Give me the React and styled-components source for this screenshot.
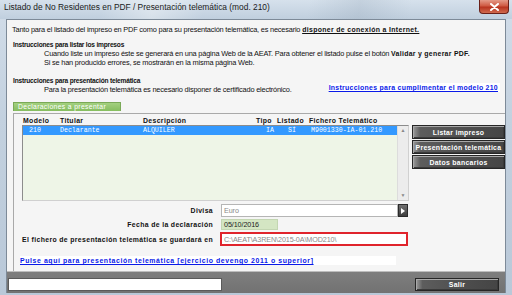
import styled, { createGlobalStyle } from 'styled-components';

const Global = createGlobalStyle`
  html, body { margin: 0; padding: 0; }
  body { width: 512px; height: 295px; overflow: hidden; font-family: "Liberation Sans", Arial, sans-serif; }
`;

const COLS = '37px 83px 113px 21px 32px 1fr';

const Window = styled.div`
  width: 512px;
  height: 295px;
  display: flex;
  flex-direction: column;
  background: linear-gradient(180deg, #d2dde9 0%, #c3d1df 40%, #b9c8d8 100%);
`;

const TitleBar = styled.div`
  height: 19px;
  display: flex;
  justify-content: space-between;
  align-items: flex-start;
  padding-left: 4px;
  background:
    linear-gradient(100deg, transparent 20%, rgba(255,255,255,0.35) 30%, transparent 40%, transparent 60%, rgba(120,140,160,0.18) 70%, transparent 80%),
    linear-gradient(180deg, #d6e1ec 0%, #c0cfde 100%);
`;

const Title = styled.span`
  font-size: 8.4px;
  letter-spacing: 0;
  color: #1a1a1a;
  line-height: 14px;
`;

const CloseBtn = styled.div`
  width: 28px;
  height: 13px;
  margin-right: 3px;
  display: flex;
  align-items: center;
  justify-content: center;
  border: 1px solid #6a2018;
  border-top: 0;
  border-radius: 0 0 4px 4px;
  background: linear-gradient(180deg, #e49a88 0%, #cf5a43 45%, #b8341f 55%, #d06a4e 100%);
`;

const Frame = styled.div`
  flex: 1;
  display: flex;
  padding: 0 6px 2px 6px;
  min-height: 0;
`;

const Client = styled.div`
  flex: 1;
  display: flex;
  flex-direction: column;
  background: #f5f5f5;
  border: 1px solid #7d8a98;
  border-bottom: 0;
`;

const Content = styled.div`
  flex: 1;
  padding: 4px 0 0 5px;
  color: #111;
`;

const Para = styled.div`
  font-size: 7.4px;
  letter-spacing: -0.2px;
  line-height: 9px;
  margin-left: ${({ indent }) => indent || 0}px;
  margin-top: ${({ top }) => top || 0}px;
  white-space: nowrap;
`;

const Heading = styled.div`
  font-size: 6.6px;
  font-weight: bold;
  letter-spacing: -0.2px;
  line-height: 9px;
  margin-left: 1px;
  margin-top: ${({ top }) => top || 0}px;
`;

const Strong = styled.b`
  font-size: 6.9px;
  letter-spacing: ${({ spread }) => spread}px;
  text-decoration: ${({ underline }) => (underline ? 'underline' : 'none')};
`;

const Row = styled.div`
  display: flex;
  justify-content: space-between;
  align-items: flex-end;
`;

const Link = styled.a`
  display: inline-block;
  background: #fff;
  color: #0a1ae8;
  font-size: 6.9px;
  font-weight: bold;
  letter-spacing: ${({ spread }) => spread || 0.3}px;
  line-height: 9px;
  text-decoration: underline;
  width: ${({ w }) => (w ? `${w}px` : 'auto')};
  margin: ${({ m }) => m || 0};
  padding-right: 2px;
  white-space: nowrap;
`;

const Tab = styled.div`
  display: inline-block;
  margin: 8px 0 0 1px;
  height: 9px;
  width: 108px;
  box-sizing: border-box;
  padding-left: 4px;
  background: linear-gradient(180deg, #a3d07f 0%, #86bd5f 100%);
  border: 1px solid #7aa957;
  border-bottom: 0;
  color: #fff;
  font-size: 6.8px;
  letter-spacing: 0.35px;
  line-height: 8px;
`;

const Group = styled.div`
  margin-left: 1px;
  border-top: 1px solid #a9a9a9;
  border-left: 1px solid #a9a9a9;
  height: 158px;
  box-sizing: border-box;
`;

const ListArea = styled.div`
  padding: 2px 0 0 8px;
`;

const HeaderRow = styled.div`
  display: grid;
  grid-template-columns: ${COLS};
  padding-left: 1px;
  width: 386px;
  font-size: 6.9px;
  font-weight: bold;
  letter-spacing: 0.35px;
  line-height: 9px;
`;

const ListRow = styled.div`
  display: flex;
  gap: 3px;
`;

const ListBox = styled.div`
  width: 387px;
  height: 76px;
  box-sizing: border-box;
  display: flex;
  border: 1px solid #8c8c8c;
  border-right-color: #d0d0d0;
  border-bottom-color: #d0d0d0;
  background: #eef5e7;
`;

const Rows = styled.div`
  flex: 1;
`;

const DataRow = styled.div`
  display: grid;
  grid-template-columns: ${COLS};
  height: 9px;
  background: ${({ selected }) => (selected ? '#3399ff' : 'transparent')};
  color: ${({ selected }) => (selected ? '#fff' : '#000')};
  font-family: "Liberation Mono", "DejaVu Sans Mono", monospace;
  font-size: 6.6px;
  line-height: 9px;
`;

const Cell = styled.span`
  padding-left: ${({ pad }) => pad || 0}px;
  white-space: nowrap;
`;

const Scroll = styled.div`
  width: 10px;
  display: flex;
  flex-direction: column;
  justify-content: space-between;
  align-items: center;
  background: #ececec;
  border-left: 1px solid #dcdcdc;
  color: #888;
  font-size: 5px;
  line-height: 9px;
`;

const Buttons = styled.div`
  display: flex;
  flex-direction: column;
  gap: 1px;
  width: 93px;
`;

const DarkButton = styled.div`
  height: ${({ h }) => h || 14}px;
  width: ${({ w }) => (w ? `${w}px` : 'auto')};
  box-sizing: border-box;
  display: flex;
  align-items: center;
  justify-content: center;
  border: 1px solid #262626;
  box-shadow: inset 1px 1px 0 #a8a8a8, inset -1px -1px 0 #3a3a3a;
  background: linear-gradient(90deg, #9a9a9a 0%, #5d5d5d 8%, #4d4d4d 60%, #454545 100%);
  color: #fff;
  font-size: 6.9px;
  font-weight: bold;
  letter-spacing: 0.3px;
  white-space: nowrap;
`;

const Form = styled.div`
  display: grid;
  grid-template-columns: 193px 188px;
  column-gap: 7px;
  row-gap: 2px;
  padding: 3px 0 0 6px;
  align-items: center;
`;

const Label = styled.div`
  text-align: right;
  font-size: 6.9px;
  font-weight: bold;
  letter-spacing: 0.35px;
  white-space: nowrap;
`;

const Select = styled.div`
  display: flex;
  margin-left: 1px;
`;

const Field = styled.div`
  box-sizing: border-box;
  width: ${({ w }) => w}px;
  height: ${({ h }) => h}px;
  background: ${({ bg }) => bg || '#fff'};
  border: ${({ border }) => border || '1px solid #b5b5b5'};
  color: ${({ ink }) => ink || '#8a8a8a'};
  font-size: 7.2px;
  letter-spacing: -0.1px;
  line-height: ${({ h }) => h - 2}px;
  padding-left: 2px;
  margin-left: ${({ ml }) => ml || 0}px;
  white-space: nowrap;
  overflow: hidden;
`;

const DropBtn = styled.div`
  width: 10px;
  height: 13px;
  box-sizing: border-box;
  display: flex;
  align-items: center;
  justify-content: center;
  background: linear-gradient(180deg, #707070, #3e3e3e);
  border: 1px solid #2a2a2a;
`;

const FullRow = styled.div`
  grid-column: 1 / -1;
  margin-top: 1px;
`;

const StatusBar = styled.div`
  height: 22px;
  box-sizing: border-box;
  display: flex;
  justify-content: space-between;
  align-items: flex-end;
  padding: 0 6px 2px 1px;
  background: linear-gradient(180deg, #7e7e7e, #727272);
  border-top: 1px solid #bdbdbd;
`;

const StatusField = styled.div`
  width: 214px;
  height: 13px;
  box-sizing: border-box;
  background: #fff;
  border: 1px solid #5a5a5a;
`;

export default function App() {
  return (
    <Window>
      <Global />
      <TitleBar>
        <Title>Listado de No Residentes en PDF / Presentación telemática (mod. 210)</Title>
        <CloseBtn>
          <svg width="9" height="8" viewBox="0 0 9 8">
            <path d="M1 1 L8 7 M8 1 L1 7" stroke="#fff" strokeWidth="2" strokeLinecap="round" />
          </svg>
        </CloseBtn>
      </TitleBar>
      <Frame>
        <Client>
          <Content>
            <Para top={1}>
              Tanto para el listado del impreso en PDF como para su presentación telemática, es necesario{' '}
              <Strong spread={0.35} underline>disponer de conexión a Internet.</Strong>
            </Para>
            <Heading top={6}>Instrucciones para listar los impresos</Heading>
            <Para indent={32}>
              Cuando liste un impreso éste se generará en una página Web de la AEAT. Para obtener el listado pulse el botón{' '}
              <Strong spread={0.3}>Validar y generar PDF.</Strong>
            </Para>
            <Para indent={32}>Si se han producido errores, se mostrarán en la misma página Web.</Para>
            <Row>
              <div>
                <Heading top={9}>Instrucciones para presentación telemática</Heading>
                <Para indent={32}>Para la presentación telemática es necesario disponer de certificado electrónico.</Para>
              </div>
              <Link href="#" m="0 5px 2px 0">Instrucciones para cumplimentar el modelo 210</Link>
            </Row>
            <Tab>Declaraciones a presentar</Tab>
            <Group>
              <ListArea>
                <HeaderRow>
                  <span>Modelo</span>
                  <span>Titular</span>
                  <span>Descripción</span>
                  <span>Tipo</span>
                  <span>Listado</span>
                  <span>Fichero Telemático</span>
                </HeaderRow>
                <ListRow>
                  <ListBox>
                    <Rows>
                      <DataRow selected>
                        <Cell pad={6}>210</Cell>
                        <Cell>Declarante</Cell>
                        <Cell>ALQUILER</Cell>
                        <Cell pad={10}>IA</Cell>
                        <Cell pad={11}>SÍ</Cell>
                        <Cell pad={2}>M9001330-IA-01.210</Cell>
                      </DataRow>
                    </Rows>
                    <Scroll>
                      <span>▲</span>
                      <span>▼</span>
                    </Scroll>
                  </ListBox>
                  <Buttons>
                    <DarkButton>Listar impreso</DarkButton>
                    <DarkButton>Presentación telemática</DarkButton>
                    <DarkButton>Datos bancarios</DarkButton>
                  </Buttons>
                </ListRow>
              </ListArea>
              <Form>
                <Label>Divisa</Label>
                <Select>
                  <Field w={178} h={13}>Euro</Field>
                  <DropBtn>
                    <svg width="4" height="6" viewBox="0 0 4 6">
                      <path d="M0 0 L4 3 L0 6 Z" fill="#fff" />
                    </svg>
                  </DropBtn>
                </Select>
                <Label>Fecha de la declaración</Label>
                <Field w={57} h={11} ml={1} bg="#d4e6c3" ink="#222" border="1px solid #c3d6b2">05/10/2016</Field>
                <Label>El fichero de presentación telemática se guardará en</Label>
                <Field w={188} h={14} border="2px solid #e0242c">C:\AEAT\A3REN\2015-0A\MOD210\</Field>
                <FullRow>
                  <Link href="#" w={374} spread={0.6}>Pulse aquí para presentación telemática [ejercicio devengo 2011 o superior]</Link>
                </FullRow>
              </Form>
            </Group>
          </Content>
          <StatusBar>
            <StatusField />
            <DarkButton w={84} h={13}>Salir</DarkButton>
          </StatusBar>
        </Client>
      </Frame>
    </Window>
  );
}
